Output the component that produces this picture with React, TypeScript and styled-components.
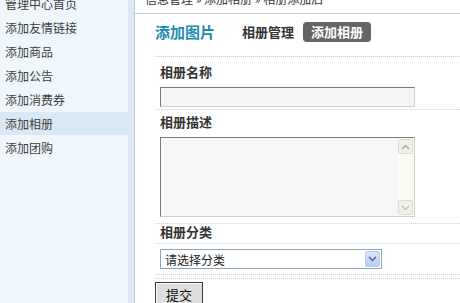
import React from 'react';
import styled, { createGlobalStyle } from 'styled-components';

const GlobalStyle = createGlobalStyle`
  html, body {
    margin: 0;
    padding: 0;
    background: #fff;
    overflow: hidden;
  }
  body {
    font-family: 'Noto Sans CJK SC', 'Noto Sans', sans-serif;
    font-size: 12px;
    color: #333;
  }
`;

// the page is scrolled down a little, so the first row is cut at the top
const Page = styled.div`
  display: flex;
  margin-top: -9px;
  height: calc(100vh + 9px);
`;

const Sidebar = styled.aside`
  width: 135px;
  flex-shrink: 0;
  box-sizing: border-box;
  background: #eff7fc;
  border-right: 1px solid #b9c8d5;
  box-shadow: inset -6px 0 0 #dce9f5;
`;

const MenuList = styled.ul`
  list-style: none;
  margin: 0;
  padding: 0;
  width: 128px;
`;

const MenuItem = styled.li<{ $active?: boolean }>`
  height: 23px;
  margin: 1px 0;
  padding-left: 5px;
  line-height: 23px;
  font-size: 12px;
  color: #3e3e3e;
  white-space: nowrap;
  background: ${(p) => (p.$active ? '#dae8f5' : 'transparent')};
`;

const Main = styled.main`
  flex: 1;
  min-width: 0;
  background: #fff;
`;

const Breadcrumb = styled.div`
  padding: 0 0 6px 10px;
  line-height: 16px;
  font-size: 12px;
  color: #333;
  border-bottom: 1px solid #c3cfd9;
  white-space: nowrap;
`;

const Content = styled.div`
  padding-left: 20px;
`;

const TitleBar = styled.div`
  display: flex;
  align-items: center;
  padding: 8px 0 14px;
  border-bottom: 1px dotted #cfcfcf;
`;

const PageTitle = styled.h2`
  margin: 0;
  font-size: 15px;
  line-height: 20px;
  font-weight: bold;
  color: #238bb1;
`;

const Tab = styled.span<{ $current?: boolean }>`
  margin-left: ${(p) => (p.$current ? '9px' : '27px')};
  padding: ${(p) => (p.$current ? '0 8px' : '0')};
  font-size: 13px;
  line-height: 20px;
  font-weight: bold;
  border-radius: 4px;
  color: ${(p) => (p.$current ? '#fff' : '#333')};
  background: ${(p) => (p.$current ? '#656565' : 'transparent')};
`;

const Section = styled.div<{ $pt: number; $pb: number; $solid?: boolean }>`
  padding: ${(p) => `${p.$pt}px 0 ${p.$pb}px`};
  border-bottom: ${(p) => (p.$solid ? '1px solid #e6edf3' : '1px dotted #d2d2d2')};
`;

const Spacer = styled.div`
  height: 3px;
  border-bottom: 1px dotted #d2d2d2;
`;

const Label = styled.div<{ $lh?: number }>`
  padding-left: 5px;
  font-size: 13px;
  line-height: ${(p) => p.$lh ?? 20}px;
  font-weight: bold;
  color: #333;
`;

const TextInput = styled.input`
  display: block;
  margin: 5px 0 0 5px;
  width: 255px;
  height: 20px;
  box-sizing: border-box;
  border: 1px solid;
  border-color: #7a7a7a #d0d0d0 #d0d0d0 #7a7a7a;
  background: #f5f5f5;
  padding: 0 3px;
  outline: none;
`;

const TextAreaBox = styled.div`
  display: flex;
  margin: 5px 0 0 5px;
  width: 255px;
  height: 80px;
  box-sizing: border-box;
  border: 1px solid;
  border-color: #7a7a7a #d0d0d0 #d0d0d0 #7a7a7a;
  background: #f7f7f7;
`;

const TextArea = styled.textarea`
  flex: 1;
  border: none;
  background: transparent;
  resize: none;
  outline: none;
  overflow: hidden;
`;

const ScrollBar = styled.div`
  display: flex;
  flex-direction: column;
  justify-content: space-between;
  width: 15px;
  padding: 1px 1px 1px 0;
  background: #fbfbf4;
`;

const ScrollButton = styled.div`
  display: flex;
  align-items: center;
  justify-content: center;
  height: 15px;
  box-sizing: border-box;
  border: 1px solid #dcdcd2;
  border-radius: 2px;
  background: #f1f1ea;
`;

const SelectBox = styled.div`
  display: flex;
  align-items: center;
  margin-left: 5px;
  width: 222px;
  height: 20px;
  box-sizing: border-box;
  border: 1px solid #8ea4b8;
  background: #fff;
`;

const SelectText = styled.span`
  flex: 1;
  padding-left: 4px;
  font-size: 12px;
  color: #222;
`;

const DropButton = styled.span`
  display: flex;
  align-items: center;
  justify-content: center;
  width: 15px;
  height: 16px;
  margin-right: 1px;
  box-sizing: border-box;
  border: 1px solid #b7c9ee;
  border-radius: 2px;
  background: linear-gradient(#dbe6fd, #b9cdf7);
`;

const SubmitButton = styled.button`
  display: block;
  margin-top: 3px;
  width: 48px;
  height: 24px;
  padding: 0;
  border: 1px solid #3a3a3a;
  box-shadow: inset 1px 1px 0 #fff;
  background: #dedede;
  font-family: 'Noto Sans CJK SC', 'Noto Sans', sans-serif;
  font-size: 13px;
  color: #111;
`;

const menu = ['管理中心首页', '添加友情链接', '添加商品', '添加公告', '添加消费券', '添加相册', '添加团购'];

function Chevron({ up, color }: { up?: boolean; color: string }) {
  return (
    <svg width="9" height="6" viewBox="0 0 9 6">
      <path d={up ? 'M1 5 L4.5 1.5 L8 5' : 'M1 1 L4.5 4.5 L8 1'} fill="none" stroke={color} strokeWidth="1.4" />
    </svg>
  );
}

export default function App() {
  return (
    <>
      <GlobalStyle />
      <Page>
        <Sidebar>
          <MenuList>
            {menu.map((m, i) => (
              <MenuItem key={m} $active={i === 5}>
                {m}
              </MenuItem>
            ))}
          </MenuList>
        </Sidebar>
        <Main>
          <Breadcrumb>信息管理 » 添加相册 » 相册添加后</Breadcrumb>
          <Content>
            <TitleBar>
              <PageTitle>添加图片</PageTitle>
              <Tab>相册管理</Tab>
              <Tab $current>添加相册</Tab>
            </TitleBar>
            <Section $pt={5} $pb={2}>
              <Label>相册名称</Label>
              <TextInput type="text" />
            </Section>
            <Section $pt={2} $pb={6}>
              <Label>相册描述</Label>
              <TextAreaBox>
                <TextArea />
                <ScrollBar>
                  <ScrollButton>
                    <Chevron up color="#a9a9a0" />
                  </ScrollButton>
                  <ScrollButton>
                    <Chevron color="#c4c4bc" />
                  </ScrollButton>
                </ScrollBar>
              </TextAreaBox>
            </Section>
            <Section $pt={0} $pb={3} $solid>
              <Label $lh={16}>相册分类</Label>
            </Section>
            <Section $pt={5} $pb={5}>
              <SelectBox>
                <SelectText>请选择分类</SelectText>
                <DropButton>
                  <Chevron color="#4a5f86" />
                </DropButton>
              </SelectBox>
            </Section>
            <Spacer />
            <SubmitButton type="button">提交</SubmitButton>
          </Content>
        </Main>
      </Page>
    </>
  );
}
